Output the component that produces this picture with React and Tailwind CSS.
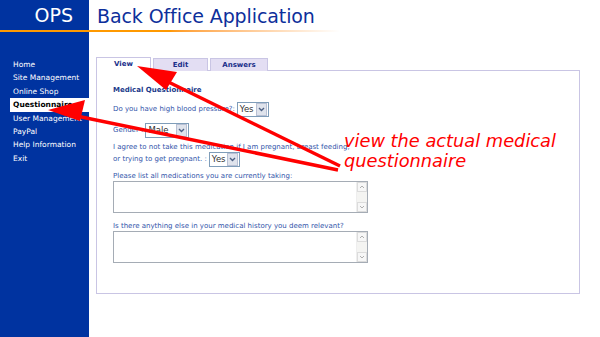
import React from 'react';

const font = { fontFamily: '"DejaVu Sans", Verdana, sans-serif' };

// Old-style dropdown: white box + grey button with a chevron
function Select({ value, width }) {
  return (
    <div className={`inline-flex items-center h-[15px] border border-[#7f9db9] bg-white ${width}`}>
      <span className="flex-1 pl-[2px] text-[8.5px] text-[#333] leading-none">{value}</span>
      <span className="w-[11px] h-[13px] mr-px bg-[#dfe3ec] border border-[#b8c0d4] flex items-center justify-center">
        <svg width="7" height="5" viewBox="0 0 7 5">
          <path d="M1 1l2.5 2.5L6 1" stroke="#4d6185" strokeWidth="1.4" fill="none" />
        </svg>
      </span>
    </div>
  );
}

// Textarea with a classic vertical scrollbar
function TextBox() {
  return (
    <div className="flex w-[255px] h-[32px] border border-[#a5acb5] bg-white">
      <div className="flex-1" />
      <div className="w-[11px] flex flex-col justify-between bg-[#f4f4f2] border-l border-[#eee]">
        <span className="h-[10px] flex items-center justify-center border border-[#dcdcdc] bg-[#f7f7f7]">
          <svg width="6" height="4" viewBox="0 0 6 4"><path d="M1 3l2-2 2 2" stroke="#b0b0b0" fill="none" /></svg>
        </span>
        <span className="h-[10px] flex items-center justify-center border border-[#dcdcdc] bg-[#f7f7f7]">
          <svg width="6" height="4" viewBox="0 0 6 4"><path d="M1 1l2 2 2-2" stroke="#b0b0b0" fill="none" /></svg>
        </span>
      </div>
    </div>
  );
}

const navItems = ['Home', 'Site Management', 'Online Shop', 'Questionnaire', 'User Management', 'PayPal', 'Help Information', 'Exit'];

export default function App() {
  return (
    <div className="relative w-[600px] h-[337px] bg-white overflow-hidden" style={font}>
      {/* Header */}
      <div className="flex h-[30px]">
        <div className="w-[89px] bg-[#0033a0] flex items-end justify-end pr-[16px] pb-[5px]">
          <span className="text-white text-[19px] leading-none">OPS</span>
        </div>
        <div className="flex items-end pl-[8px] pb-[4px]">
          <span className="text-[#0d2f9b] text-[19px] leading-none tracking-[-0.1px]">Back Office Application</span>
        </div>
      </div>
      <div className="h-[2px] w-[340px] bg-gradient-to-r from-[#ff9900] via-[#ff9900] to-[#ffffff]" />

      {/* Body */}
      <div className="flex h-[305px]">
        <div className="w-[89px] bg-[#0033a0] pt-[26px] flex flex-col">
          {navItems.map((item) => (
            <div
              key={item}
              className={`ml-[10px] h-[13.4px] pl-[3px] flex items-center text-[7.5px] whitespace-nowrap overflow-hidden ${
                item === 'Questionnaire' ? 'bg-white text-black font-bold' : 'text-white'
              }`}
            >
              {item}
            </div>
          ))}
        </div>

        <div className="flex-1 pl-[7px] pt-[25px]">
          {/* Tabs */}
          <div className="flex items-end gap-[2px] h-[14px]">
            <div className="w-[55px] h-[14px] bg-white border border-b-0 border-[#c9c5e4] flex items-center justify-center text-[7px] font-bold text-[#1a2f8a]">View</div>
            <div className="w-[55px] h-[13px] bg-[#e3def3] border border-b-0 border-[#c9c5e4] flex items-center justify-center text-[7px] font-bold text-[#1a2f8a]">Edit</div>
            <div className="w-[58px] h-[13px] bg-[#e3def3] border border-b-0 border-[#c9c5e4] flex items-center justify-center text-[7px] font-bold text-[#1a2f8a]">Answers</div>
          </div>

          {/* Panel */}
          <div className="w-[484px] h-[224px] -mt-px border border-[#c9c5e4] pl-[16px] pt-[14px] text-[7px] text-[#3355aa]">
            <div className="font-bold text-[#1a3a8a] h-[10px] leading-[10px]">Medical Questionnaire</div>
            <div className="flex items-center gap-[2px] mt-[7px]">
              <span>Do you have high blood pressure?:</span>
              <Select value="Yes" width="w-[32px]" />
            </div>
            <div className="flex items-center gap-[2px] mt-[6px]">
              <span>Gender :</span>
              <Select value="Male" width="w-[44px]" />
            </div>
            <div className="mt-[4px] leading-[10px]">I agree to not take this medication if I am pregnant, breast feeding,</div>
            <div className="flex items-center gap-[2px]">
              <span>or trying to get pregnant. :</span>
              <Select value="Yes" width="w-[31px]" />
            </div>
            <div className="mt-[4px] leading-[10px]">Please list all medications you are currently taking:</div>
            <TextBox />
            <div className="mt-[8px] leading-[10px]">Is there anything else in your medical history you deem relevant?</div>
            <TextBox />
          </div>
        </div>
      </div>

      {/* Annotation arrows */}
      <svg className="absolute left-0 top-0 pointer-events-none" width="600" height="337">
        <line x1="340" y1="166" x2="150" y2="73" stroke="#ff0000" strokeWidth="3.5" />
        <polygon points="137,66 177,72 166,90" fill="#ff0000" />
        <line x1="338" y1="170" x2="62" y2="113" stroke="#ff0000" strokeWidth="3.5" />
        <polygon points="48,110 85,100 80,121" fill="#ff0000" />
      </svg>
      <div className="absolute left-[344px] top-[131px] text-[#ff0000] italic text-[17.8px] leading-[20px]">
        <div>view the actual medical</div>
        <div>questionnaire</div>
      </div>
    </div>
  );
}
